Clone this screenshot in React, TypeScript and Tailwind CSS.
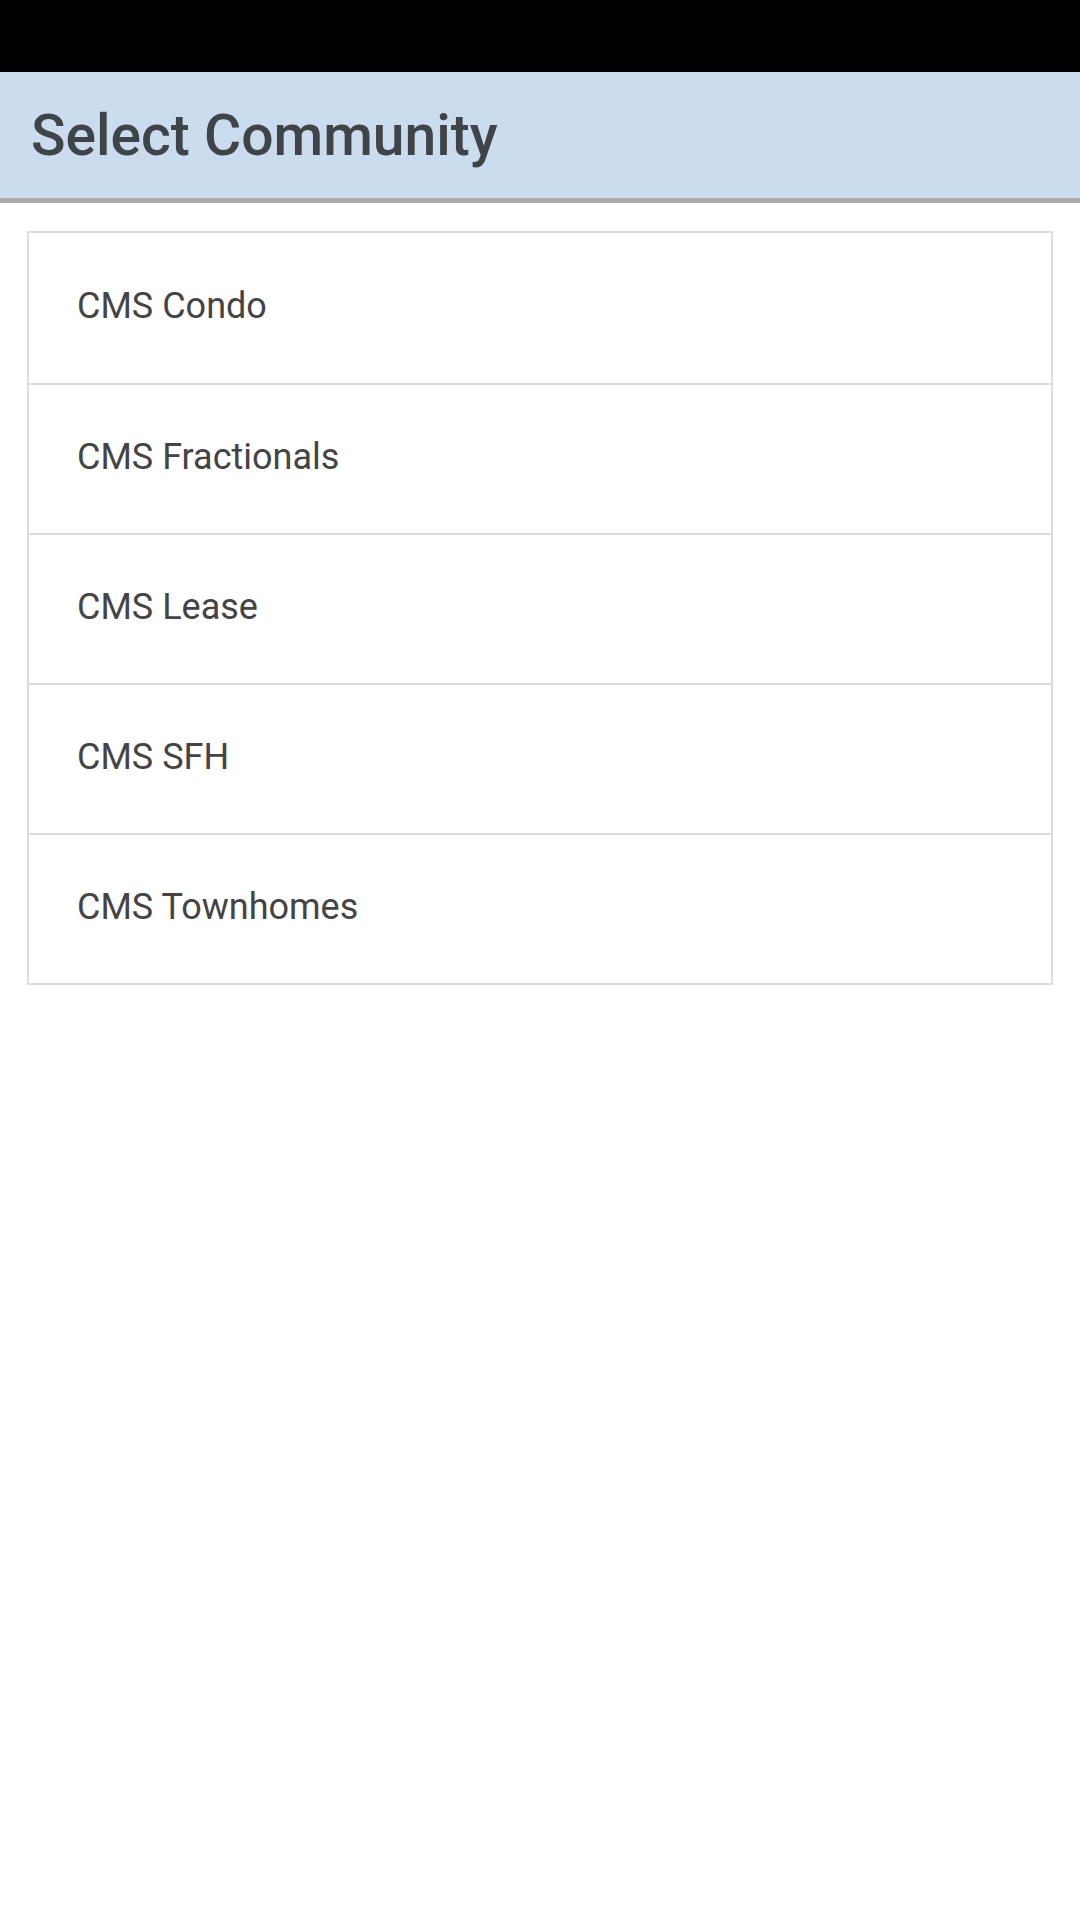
const communities = [
  "CMS Condo",
  "CMS Fractionals",
  "CMS Lease",
  "CMS SFH",
  "CMS Townhomes",
];

function App() {
  return (
    <div
      className="min-h-[1920px] bg-white"
      style={{ fontFamily: "Roboto, 'Noto Sans', sans-serif" }}
    >
      {/* Status bar */}
      <div className="h-[72px] bg-black" />

      {/* Header */}
      <div className="h-[131px] bg-[#cbdcee] border-b-[5px] border-[#a9abad] flex items-center px-[31px]">
        <h1 className="text-[57px] font-medium text-[#3f4448] leading-none">
          Select Community
        </h1>
      </div>

      {/* List */}
      <div className="mx-[27px] mt-[28px] border-2 border-[#dcdcdc]">
        {communities.map((name, i) => (
          <div
            key={name}
            className={
              "h-[150px] flex items-center pl-[48px] pb-[5px] text-[36px] text-[#444444] " +
              (i > 0 ? "border-t-2 border-[#dcdcdc]" : "")
            }
          >
            {name}
          </div>
        ))}
      </div>
    </div>
  );
}

export default App;
